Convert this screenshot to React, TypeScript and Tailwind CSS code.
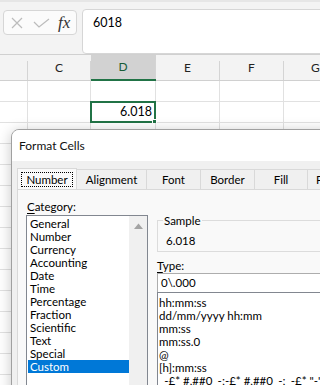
import React from "react";

const cols = [
  { l: "", w: "w-[28px]" },
  { l: "C", w: "w-[63px]" },
  { l: "D", w: "w-[65px]" },
  { l: "E", w: "w-[64px]" },
  { l: "F", w: "w-[64px]" },
  { l: "G", w: "w-[64px]" },
];

const categories = [
  "General",
  "Number",
  "Currency",
  "Accounting",
  "Date",
  "Time",
  "Percentage",
  "Fraction",
  "Scientific",
  "Text",
  "Special",
  "Custom",
];

const types = [
  "hh:mm:ss",
  "dd/mm/yyyy hh:mm",
  "mm:ss",
  "mm:ss.0",
  "@",
  "[h]:mm:ss",
  '_-£* #,##0_-;-£* #,##0_-;_-£* "-"_-',
];

const tabs = [
  { t: "Number", w: "w-[60px]" },
  { t: "Alignment", w: "w-[70px]" },
  { t: "Font", w: "w-[54px]" },
  { t: "Border", w: "w-[54px]" },
  { t: "Fill", w: "w-[53px]" },
  { t: "Protection", w: "w-[70px]" },
];

export default function App() {
  const rows = Array.from({ length: 15 }, (_, i) => i);
  return (
    <div className="relative w-[320px] h-[385px] overflow-hidden bg-white font-['Segoe_UI',Lato,'Noto_Sans',sans-serif] text-black">
      {/* formula bar */}
      <div className="h-[54px] bg-[#f3f3f3] border-t-2 border-[#e6e6e6] flex items-start">
        <div className="ml-[3px] mt-[8px] w-[74px] h-[25px] rounded-[4px] border border-[#d6d6d6] bg-[#fbfbfb] flex items-center">
          <svg width="12" height="12" viewBox="0 0 12 12" className="ml-[7px]">
            <path d="M1 1 L11 11 M11 1 L1 11" stroke="#bcbcbc" strokeWidth="1.2" fill="none" />
          </svg>
          <svg width="17" height="10" viewBox="0 0 17 10" className="ml-[10px]">
            <path d="M1 4 L6 9 L16 1" stroke="#bcbcbc" strokeWidth="1.2" fill="none" />
          </svg>
          <span className="ml-[8px] font-['Liberation_Serif',serif] italic text-[17px] leading-none text-[#333]">fx</span>
        </div>
        <div className="ml-[5px] mt-[7px] flex-1 -mr-[10px] h-[45px] rounded-[4px] border border-[#d6d6d6] bg-white">
          <div className="pl-[10px] pt-[5px] text-[12.5px] leading-[16px]">6018</div>
        </div>
      </div>

      {/* column headers */}
      <div className="flex h-[27px] bg-[#f3f3f3] border-t border-b border-[#d0d0d0]">
        {cols.map((c, i) => (
          <div
            key={i}
            className={`${c.w} shrink-0 flex ${c.l === "D" ? "bg-[#d2d2d2] border-b-2 border-[#217346] -mb-px" : ""}`}
          >
            <div className={`flex-1 flex items-center justify-center text-[12px] ${c.l === "D" ? "text-[#185c37]" : "text-[#222]"}`}>
              {c.l}
            </div>
            <div className="w-px h-[19px] self-end bg-[#d4d4d4]" />
          </div>
        ))}
      </div>

      {/* grid rows */}
      {rows.map((r) => (
        <div key={r} className="flex h-[21px] border-b border-[#e1e1e1]">
          {cols.map((c, i) => (
            <div key={i} className={`${c.w} shrink-0 border-r border-[#e1e1e1] relative`}>
              {r === 1 && c.l === "D" && (
                <>
                  <div className="absolute -left-[1px] -top-[1px] w-[66px] h-[22px] border-2 border-[#217346]" />
                  <div className="absolute right-[3px] top-0 h-[20px] flex items-center text-[12.5px]">6.018</div>
                  <div className="absolute -right-[2px] -bottom-[2px] w-[5px] h-[5px] bg-[#217346] border border-white" />
                </>
              )}
            </div>
          ))}
        </div>
      ))}

      {/* dialog */}
      <div className="absolute left-[11px] top-[129px] w-[340px] h-[300px] rounded-[8px] border border-[#a0a0a0] bg-[#f0f0f0] shadow-[0_2px_14px_rgba(0,0,0,0.22)] overflow-hidden text-[11.5px]">
        <div className="h-[31px] bg-white flex items-center pl-[7px] text-[12px] text-[#111]">Format Cells</div>
        <div className="pl-[5px] pt-[8px]">
          <div className="flex h-[20px]">
            {tabs.map((t, i) => (
              <div
                key={t.t}
                className={`${t.w} shrink-0 flex items-center justify-center border-t border-r border-[#d9d9d9] ${i === 0 ? "border-l bg-[#f9f9f9] h-[21px] -mt-[1px] relative z-10" : "bg-[#f0f0f0]"}`}
              >
                {i === 0 ? (
                  <span className="border border-dotted border-black px-[4px] leading-[13px] mt-[1px]">{t.t}</span>
                ) : (
                  <span>{t.t}</span>
                )}
              </div>
            ))}
          </div>
          <div className="border border-[#d9d9d9] bg-[#f9f9f9] h-[260px] flex">
            {/* left column */}
            <div className="pl-[8px] flex flex-col">
              <div className="mt-[10px] h-[14px] leading-[14px] pl-[1px]">
                <span className="underline underline-offset-[2px]">C</span>ategory:
              </div>
              <div className="mt-[1px] w-[122px] h-[220px] border border-[#828790] bg-white flex">
                <div className="w-[102px] pl-[1px] pt-[1px]">
                  {categories.map((c) => (
                    <div
                      key={c}
                      className={`h-[13px] leading-[13px] pl-[2px] whitespace-nowrap ${c === "Custom" ? "bg-[#0078d7] text-white" : ""}`}
                    >
                      {c}
                    </div>
                  ))}
                </div>
                <div className="w-[18px] bg-[#f0f0f0] flex justify-center pt-[7px]">
                  <svg width="9" height="6" viewBox="0 0 9 6">
                    <path d="M0 6 L4.5 0.5 L9 6 Z" fill="#a3a3a3" />
                  </svg>
                </div>
              </div>
            </div>
            {/* right column */}
            <div className="ml-[9px] w-[200px] flex flex-col">
              <div className="relative mt-[30px] h-[32px] border border-[#dcdcdc]">
                <div className="absolute -top-[7px] left-[5px] px-[1px] bg-[#f9f9f9] leading-[13px]">Sample</div>
                <div className="pl-[8px] pt-[13px] leading-[13px]">6.018</div>
              </div>
              <div className="mt-[7px] h-[13px] leading-[13px]">
                <span className="underline underline-offset-[2px]">T</span>ype:
              </div>
              <div className="mt-[1px] h-[19px] border-t border-x border-[#adadad] bg-white flex items-center pl-[3px]">
                0\.000
              </div>
              <div className="h-[120px] border border-[#828790] bg-white pt-[3px] pl-[1px]">
                {types.map((t) => (
                  <div key={t} className="h-[13px] leading-[13px] whitespace-pre">
                    {t}
                  </div>
                ))}
              </div>
            </div>
          </div>
        </div>
      </div>
    </div>
  );
}
